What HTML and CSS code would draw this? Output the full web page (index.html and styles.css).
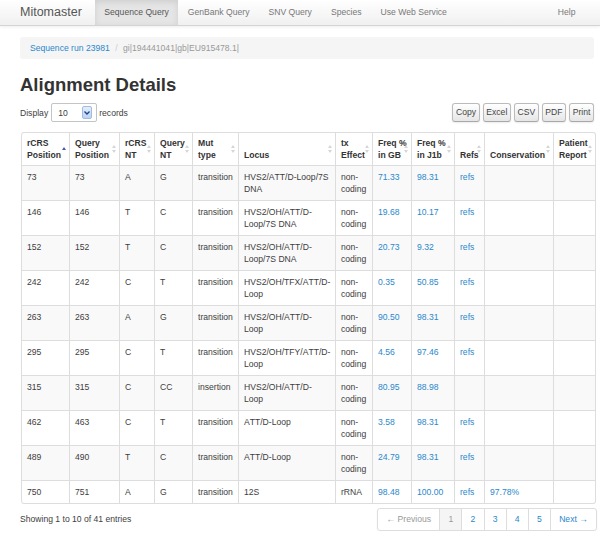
FILE: index.html
```html
<!DOCTYPE html>
<html>
<head>
<meta charset="utf-8">
<title>Mitomaster - Alignment Details</title>
<link rel="stylesheet" href="styles.css">
</head>
<body>
<div class="navbar">
  <span class="brand">Mitomaster</span>
  <ul class="nav">
    <li class="active"><a href="#">Sequence Query</a></li>
    <li><a href="#">GenBank Query</a></li>
    <li><a href="#">SNV Query</a></li>
    <li><a href="#">Species</a></li>
    <li><a href="#">Use Web Service</a></li>
    <li class="help"><a href="#">Help</a></li>
  </ul>
</div>

<div class="container">
  <div class="breadcrumb">
    <a href="#">Sequence run 23981</a> <span class="divider">/</span> <span class="current">gi|194441041|gb|EU915478.1|</span>
  </div>

  <h1 class="title">Alignment Details</h1>

  <div class="controls">
    <div class="length">
      <span>Display</span>
      <span class="select"><span class="select-value">10</span><span class="select-arrow"><svg width="6" height="4" viewBox="0 0 6 4"><path d="M0.5 0.5 L3 3 L5.5 0.5" fill="none" stroke="#1f3f8a" stroke-width="1.3"/></svg></span></span>
      <span>records</span>
    </div>
    <div class="tools">
      <button class="btn">Copy</button>
      <button class="btn">Excel</button>
      <button class="btn">CSV</button>
      <button class="btn">PDF</button>
      <button class="btn">Print</button>
    </div>
  </div>

  <table class="grid">
    <thead>
      <tr>
        <th class="sorting-asc">rCRS<br>Position</th>
        <th class="sorting">Query<br>Position</th>
        <th class="sorting">rCRS<br>NT</th>
        <th class="sorting">Query<br>NT</th>
        <th class="sorting">Mut<br>type</th>
        <th class="sorting">Locus</th>
        <th class="sorting">tx<br>Effect</th>
        <th class="sorting">Freq %<br>in GB</th>
        <th class="sorting">Freq %<br>in J1b</th>
        <th class="sorting">Refs</th>
        <th class="sorting">Conservation</th>
        <th class="sorting">Patient<br>Report</th>
      </tr>
    </thead>
    <tbody>
      <tr><td>73</td><td>73</td><td>A</td><td>G</td><td>transition</td><td>HVS2/ATT/D-Loop/7S DNA</td><td>non-coding</td><td><a href="#">71.33</a></td><td><a href="#">98.31</a></td><td><a href="#">refs</a></td><td></td><td></td></tr>
      <tr><td>146</td><td>146</td><td>T</td><td>C</td><td>transition</td><td>HVS2/OH/ATT/D-Loop/7S DNA</td><td>non-coding</td><td><a href="#">19.68</a></td><td><a href="#">10.17</a></td><td><a href="#">refs</a></td><td></td><td></td></tr>
      <tr><td>152</td><td>152</td><td>T</td><td>C</td><td>transition</td><td>HVS2/OH/ATT/D-Loop/7S DNA</td><td>non-coding</td><td><a href="#">20.73</a></td><td><a href="#">9.32</a></td><td><a href="#">refs</a></td><td></td><td></td></tr>
      <tr><td>242</td><td>242</td><td>C</td><td>T</td><td>transition</td><td>HVS2/OH/TFX/ATT/D-Loop</td><td>non-coding</td><td><a href="#">0.35</a></td><td><a href="#">50.85</a></td><td><a href="#">refs</a></td><td></td><td></td></tr>
      <tr><td>263</td><td>263</td><td>A</td><td>G</td><td>transition</td><td>HVS2/OH/ATT/D-Loop</td><td>non-coding</td><td><a href="#">90.50</a></td><td><a href="#">98.31</a></td><td><a href="#">refs</a></td><td></td><td></td></tr>
      <tr><td>295</td><td>295</td><td>C</td><td>T</td><td>transition</td><td>HVS2/OH/TFY/ATT/D-Loop</td><td>non-coding</td><td><a href="#">4.56</a></td><td><a href="#">97.46</a></td><td><a href="#">refs</a></td><td></td><td></td></tr>
      <tr><td>315</td><td>315</td><td>C</td><td>CC</td><td>insertion</td><td>HVS2/OH/ATT/D-Loop</td><td>non-coding</td><td><a href="#">80.95</a></td><td><a href="#">88.98</a></td><td></td><td></td><td></td></tr>
      <tr><td>462</td><td>463</td><td>C</td><td>T</td><td>transition</td><td>ATT/D-Loop</td><td>non-coding</td><td><a href="#">3.58</a></td><td><a href="#">98.31</a></td><td><a href="#">refs</a></td><td></td><td></td></tr>
      <tr><td>489</td><td>490</td><td>T</td><td>C</td><td>transition</td><td>ATT/D-Loop</td><td>non-coding</td><td><a href="#">24.79</a></td><td><a href="#">98.31</a></td><td><a href="#">refs</a></td><td></td><td></td></tr>
      <tr><td>750</td><td>751</td><td>A</td><td>G</td><td>transition</td><td>12S</td><td>rRNA</td><td><a href="#">98.48</a></td><td><a href="#">100.00</a></td><td><a href="#">refs</a></td><td><a href="#">97.78%</a></td><td></td></tr>
    </tbody>
  </table>

  <div class="footer">
    <div class="info">Showing 1 to 10 of 41 entries</div>
    <ul class="pagination">
      <li class="disabled"><span>← Previous</span></li>
      <li class="active"><span>1</span></li>
      <li><a href="#">2</a></li>
      <li><a href="#">3</a></li>
      <li><a href="#">4</a></li>
      <li><a href="#">5</a></li>
      <li><a href="#">Next →</a></li>
    </ul>
  </div>
</div>
</body>
</html>
```

FILE: styles.css
```css
* {
  box-sizing: border-box;
}

body {
  margin: 0;
  font-family: "Liberation Sans", Arial, Helvetica, sans-serif;
  font-size: 8.6px;
  color: #3d3d3d;
  background: #fff;
  font-kerning: none;
}

a {
  color: #2a88cc;
  text-decoration: none;
}

/* Navbar */
.navbar {
  height: 26px;
  display: flex;
  align-items: stretch;
  padding: 0 15px 0 20px;
  background: linear-gradient(#ffffff, #f0f0f0);
  border-bottom: 1px solid #d4d4d4;
  box-shadow: 0 1px 3px rgba(0, 0, 0, 0.07);
}

.brand {
  font-size: 12.5px;
  line-height: 25px;
  color: #555;
  margin-right: 13px;
}

.nav {
  display: flex;
  flex: 1;
  list-style: none;
  margin: 0;
  padding: 0;
}

.nav a {
  display: block;
  line-height: 25px;
  padding: 0 9.5px;
  color: #777;
}

.nav .active a {
  background: #e5e5e5;
  color: #555;
  box-shadow: inset 0 2px 6px rgba(0, 0, 0, 0.1);
}

.nav .help {
  margin-left: auto;
}

/* Main */
.container {
  padding: 0 5px 0 20px;
}

.breadcrumb {
  margin: 11px 1px 0 0;
  height: 22px;
  line-height: 22px;
  padding: 0 10px;
  background: #f5f5f5;
  border-radius: 3px;
}

.breadcrumb .divider {
  color: #ccc;
  padding: 0 3px;
}

.breadcrumb .current {
  color: #999;
}

.title {
  margin: 13px 0 0;
  font-size: 18.5px;
  line-height: 25px;
  font-weight: bold;
  color: #333;
}

.controls {
  margin-top: 6px;
  height: 19px;
  display: flex;
  justify-content: space-between;
  align-items: center;
}

.length {
  display: flex;
  align-items: center;
}

.select {
  width: 46px;
  height: 19px;
  margin: 0 2px 0 3px;
  display: flex;
  align-items: center;
  padding-left: 6px;
  background: #fff;
  border: 1px solid #c4c4c4;
  border-radius: 2px;
}

.select-arrow {
  margin-left: auto;
  margin-right: 4px;
  width: 10px;
  height: 13px;
  display: flex;
  align-items: center;
  justify-content: center;
  background: linear-gradient(#e3eefb, #bcd3f1);
  border: 1px solid #9fbbe2;
  border-radius: 2px;
}

.tools {
  display: flex;
  gap: 3px;
  margin-right: 1px;
}

.btn {
  height: 19px;
  padding: 0 2.6px;
  font-family: inherit;
  font-size: 8.6px;
  line-height: 17px;
  color: #444;
  background: linear-gradient(#ffffff, #e6e6e6);
  border: 1px solid #bbb;
  border-bottom-color: #a8a8a8;
  border-radius: 3px;
  box-shadow: 0 1px 2px rgba(0, 0, 0, 0.08);
}

/* Table */
.grid {
  margin: 10px 0 0 1px;
  width: 575px;
  table-layout: fixed;
  border-collapse: separate;
  border-spacing: 0;
  border: 1px solid #ddd;
  border-left: 0;
  border-radius: 3px;
}

.grid th,
.grid td {
  border-left: 1px solid #ddd;
  border-top: 1px solid #ddd;
  padding: 4.5px 4.3px 4.5px 5px;
  line-height: 12.5px;
  text-align: left;
  vertical-align: top;
}

.grid th {
  position: relative;
  border-top: 0;
  padding: 3.5px 3px 3.5px 5px;
  font-weight: bold;
  color: #333;
  white-space: nowrap;
  vertical-align: bottom;
}

.grid th:first-child {
  border-top-left-radius: 3px;
}

.grid th:last-child {
  border-top-right-radius: 3px;
}

.grid tbody tr:last-child td:first-child {
  border-bottom-left-radius: 3px;
}

.grid tbody tr:nth-child(odd) td {
  background: #f9f9f9;
}

.grid th:nth-child(1) { width: 48px; }
.grid th:nth-child(2) { width: 50px; }
.grid th:nth-child(3) { width: 35px; }
.grid th:nth-child(4) { width: 38px; }
.grid th:nth-child(5) { width: 46px; }
.grid th:nth-child(6) { width: 97px; }
.grid th:nth-child(7) { width: 37px; }
.grid th:nth-child(8) { width: 39px; }
.grid th:nth-child(9) { width: 43px; }
.grid th:nth-child(10) { width: 30px; }
.grid th:nth-child(11) { width: 69px; }
.grid th:nth-child(12) { width: 42px; }

.sorting::before,
.sorting::after,
.sorting-asc::before {
  content: "";
  position: absolute;
  right: 3.5px;
  border-left: 2.5px solid transparent;
  border-right: 2.5px solid transparent;
}

.sorting::before {
  top: calc(50% - 4.5px);
  border-bottom: 3.5px solid #d6d6d6;
}

.sorting::after {
  top: calc(50% + 1px);
  border-top: 3.5px solid #d6d6d6;
}

.sorting-asc::before {
  top: calc(50% - 2px);
  border-bottom: 3.5px solid #4b57b0;
}

/* Footer */
.footer {
  margin: 4px -2px 0 0;
  display: flex;
  justify-content: space-between;
  align-items: center;
}

.pagination {
  display: flex;
  list-style: none;
  margin: 0;
  padding: 0;
  border: 1px solid #ddd;
  border-radius: 3px;
  box-shadow: 0 1px 2px rgba(0, 0, 0, 0.05);
}

.pagination li + li {
  border-left: 1px solid #ddd;
}

.pagination a,
.pagination span {
  display: block;
  line-height: 21px;
  padding: 0 8.2px;
}

.pagination .disabled span {
  color: #999;
}

.pagination .active span {
  color: #999;
  background: #f5f5f5;
}
```
